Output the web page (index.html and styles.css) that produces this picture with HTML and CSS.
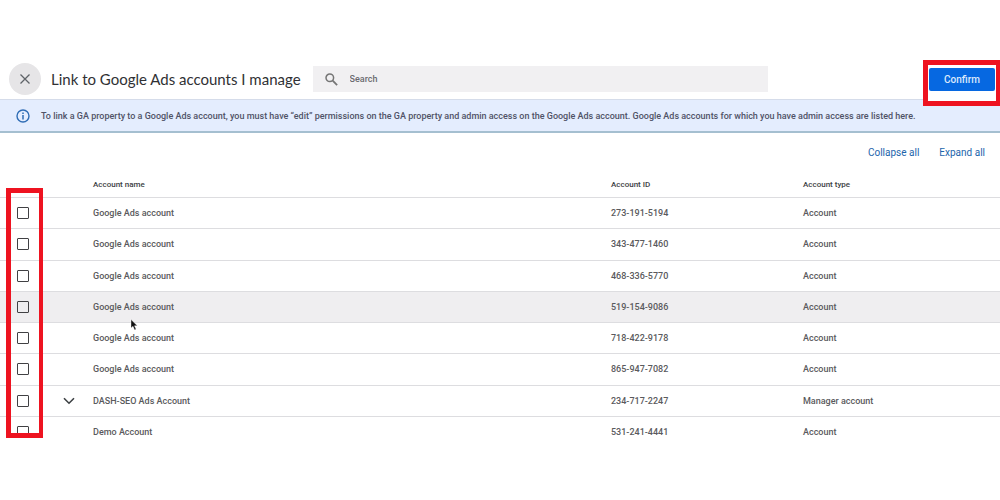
FILE: index.html
```html
<!DOCTYPE html>
<html lang="en">
<head>
  <meta charset="UTF-8">
  <meta name="viewport" content="width=device-width, initial-scale=1.0">
  <title>Link to Google Ads accounts I manage</title>
  <link rel="stylesheet" href="styles.css">
</head>
<body>
  <header class="toolbar">
    <button type="button" class="close" aria-label="Close">
      <svg width="12" height="12" viewBox="0 0 12 12"><path d="M1.5 1.5l9 9M10.5 1.5l-9 9" fill="none" stroke="#5f6368" stroke-width="1.3"/></svg>
    </button>
    <h1>Link to Google Ads accounts I manage</h1>
    <label class="search">
      <svg width="13" height="13" viewBox="0 0 13 13"><circle cx="4.8" cy="4.8" r="3.8" fill="none" stroke="#757575" stroke-width="1.5"/><path d="M7.7 7.7l4.4 4.4" stroke="#757575" stroke-width="1.8"/></svg>
      <input type="text" placeholder="Search" aria-label="Search">
    </label>
    <div class="confirm-mark">
      <button type="button" class="confirm">Confirm</button>
    </div>
  </header>
  <main>
    <div class="notice">
      <svg width="14" height="14" viewBox="0 0 14 14"><circle cx="7" cy="7" r="6" fill="none" stroke="#2f6db5" stroke-width="1.4"/><path d="M7 6v4.4M7 3.5v1.5" stroke="#2f6db5" stroke-width="1.5"/></svg>
      <p>To link a GA property to a Google Ads account, you must have “edit” permissions on the GA property and admin access on the Google Ads account. Google Ads accounts for which you have admin access are listed here.</p>
    </div>
    <div class="actions">
      <a href="#">Collapse all</a>
      <a href="#">Expand all</a>
    </div>
    <div class="accounts">
      <div class="list">
        <table>
          <thead>
            <tr>
              <th class="check"></th>
              <th class="toggle"></th>
              <th class="name">Account name</th>
              <th class="number">Account ID</th>
              <th>Account type</th>
            </tr>
          </thead>
          <tbody>
            <tr>
              <td><input type="checkbox" aria-label="Select 273-191-5194"></td>
              <td></td>
              <td>Google Ads account</td>
              <td>273-191-5194</td>
              <td>Account</td>
            </tr>
            <tr>
              <td><input type="checkbox" aria-label="Select 343-477-1460"></td>
              <td></td>
              <td>Google Ads account</td>
              <td>343-477-1460</td>
              <td>Account</td>
            </tr>
            <tr>
              <td><input type="checkbox" aria-label="Select 468-336-5770"></td>
              <td></td>
              <td>Google Ads account</td>
              <td>468-336-5770</td>
              <td>Account</td>
            </tr>
            <tr class="active">
              <td><input type="checkbox" aria-label="Select 519-154-9086"></td>
              <td></td>
              <td>Google Ads account</td>
              <td>519-154-9086</td>
              <td>Account</td>
            </tr>
            <tr>
              <td><input type="checkbox" aria-label="Select 718-422-9178"></td>
              <td></td>
              <td>Google Ads account</td>
              <td>718-422-9178</td>
              <td>Account</td>
            </tr>
            <tr>
              <td><input type="checkbox" aria-label="Select 865-947-7082"></td>
              <td></td>
              <td>Google Ads account</td>
              <td>865-947-7082</td>
              <td>Account</td>
            </tr>
            <tr>
              <td><input type="checkbox" aria-label="Select 234-717-2247"></td>
              <td>
                <button type="button" class="expand" aria-label="Expand">
                  <svg width="12" height="8" viewBox="0 0 12 8"><path d="M1 1.2l5 5 5-5" fill="none" stroke="#3c4043" stroke-width="1.6"/></svg>
                </button>
              </td>
              <td>DASH-SEO Ads Account</td>
              <td>234-717-2247</td>
              <td>Manager account</td>
            </tr>
            <tr>
              <td><input type="checkbox" aria-label="Select 531-241-4441"></td>
              <td></td>
              <td>Demo Account</td>
              <td>531-241-4441</td>
              <td>Account</td>
            </tr>
          </tbody>
        </table>
      </div>
      <div class="check-mark"></div>
      <svg class="cursor" width="8" height="12" viewBox="0 0 8 12"><path d="M1 .5v8.6l2-1.8 1.6 3.6 1.5-.7-1.6-3.4h2.8z" fill="#111" stroke="#fff" stroke-width=".4"/></svg>
    </div>
  </main>
</body>
</html>
```

FILE: styles.css
```css
body {
  margin: 0;
  padding-top: 59px;
  background: #fff;
  color: #4a4a4d;
  font-family: Roboto, "Liberation Sans", sans-serif;
  font-size: 9px;
  font-weight: 500;
}
button {
  border: none;
  padding: 0;
  font-family: inherit;
  cursor: pointer;
}
svg {
  display: block;
  flex: none;
}
.toolbar {
  display: flex;
  align-items: center;
  height: 40px;
  padding-left: 9px;
}
.close {
  display: flex;
  align-items: center;
  justify-content: center;
  width: 32px;
  height: 32px;
  border-radius: 50%;
  background: #e6e5e7;
}
h1 {
  margin: 0 12px 0 10px;
  font-family: Lato, sans-serif;
  font-size: 15px;
  font-weight: 400;
  line-height: 20px;
  color: #303134;
  white-space: nowrap;
}
.search {
  display: flex;
  align-items: center;
  gap: 12px;
  flex: 1;
  height: 26px;
  padding-left: 12px;
  background: #f1f0f2;
}
.search input {
  flex: 1;
  min-width: 0;
  border: none;
  padding: 0;
  background: none;
  font: inherit;
  outline: none;
}
.search input::placeholder {
  color: #6b6b70;
}
.confirm-mark {
  position: relative;
  z-index: 1;
  box-sizing: border-box;
  width: 77px;
  height: 46px;
  margin: 8px 0 0 155px;
  padding: 3px 0 0 1px;
  border: 5px solid #ee1320;
  border-right-width: 4px;
  background: #fff;
}
.confirm {
  display: block;
  width: 66px;
  height: 23px;
  border-radius: 2px;
  background: #0668e1;
  color: #dce9fc;
  font-size: 10px;
  font-weight: 500;
}
.notice {
  display: flex;
  align-items: center;
  gap: 11px;
  height: 31px;
  padding: 0 16px;
  border-top: 1px solid #d5dcea;
  border-bottom: 2px solid #a5bfd0;
  background: #e4edfe;
  color: #505367;
}
.notice p {
  margin: 0;
}
.actions {
  display: flex;
  justify-content: flex-end;
  gap: 20px;
  padding: 13px 15px 0 0;
  font-size: 10px;
  font-weight: 400;
  line-height: 14px;
}
.actions a {
  color: #1c64ab;
  text-decoration: none;
}
.accounts {
  position: relative;
  margin-top: 12px;
}
.list {
  height: 268px;
  overflow: hidden;
}
table {
  width: 100%;
  height: 276px;
  table-layout: fixed;
  border-collapse: separate;
  border-spacing: 0;
}
th, td {
  box-sizing: border-box;
  padding: 0;
  border-bottom: 1px solid #dddde0;
  text-align: left;
  vertical-align: middle;
}
td {
  color: #5a5a5d;
}
th {
  height: 26px;
  font-size: 8px;
  font-weight: 500;
  color: #3c4043;
}
.check {
  width: 63px;
}
.toggle {
  width: 30px;
}
.name {
  width: 518px;
}
.number {
  width: 192px;
}
.active {
  background: #efeef0;
}
td input {
  display: block;
  appearance: none;
  box-sizing: border-box;
  width: 12px;
  height: 12px;
  margin: 0 0 0 17px;
  border: 1px solid #414144;
  border-radius: 1px;
}
.expand {
  display: block;
  background: none;
}
.check-mark {
  position: absolute;
  top: 16px;
  left: 6px;
  box-sizing: border-box;
  width: 37px;
  height: 250px;
  border: 5px solid #ee1320;
  border-right-width: 4px;
  pointer-events: none;
}
.cursor {
  position: absolute;
  top: 147px;
  left: 130px;
}
```
